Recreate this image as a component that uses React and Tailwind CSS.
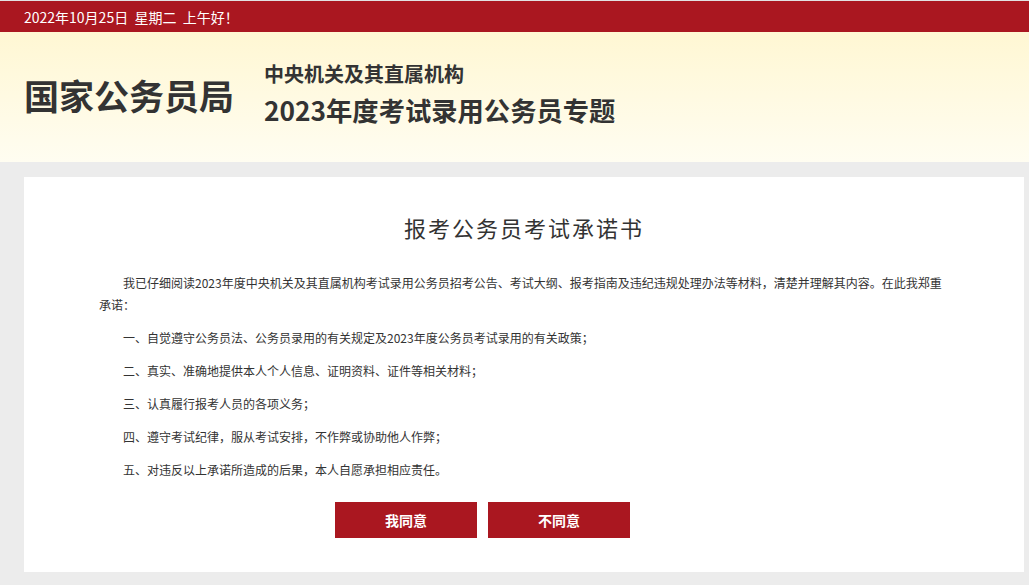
export default function App() {
  const items = [
    "一、自觉遵守公务员法、公务员录用的有关规定及2023年度公务员考试录用的有关政策；",
    "二、真实、准确地提供本人个人信息、证明资料、证件等相关材料；",
    "三、认真履行报考人员的各项义务；",
    "四、遵守考试纪律，服从考试安排，不作弊或协助他人作弊；",
    "五、对违反以上承诺所造成的后果，本人自愿承担相应责任。",
  ];
  const sans = { fontFamily: '"Noto Sans CJK SC", "Noto Sans", sans-serif' };
  return (
    <div className="min-h-[585px] bg-[#ececec] pb-[13px]" style={sans}>
      <div className="h-[1px] bg-[#e2e2e2]" />
      <div className="h-[31px] bg-[#aa1720] flex items-center pl-[24px] text-white text-[14px] leading-none">
        2022年10月25日&nbsp;&nbsp;星期二&nbsp;&nbsp;上午好！
      </div>
      <div className="h-[130px] bg-gradient-to-b from-[#fff7d3] to-[#fffdf1] flex items-center pl-[24px] pb-[4px]">
        <div className="w-[240px] text-[35px] leading-[40px] font-bold text-[#333]">国家公务员局</div>
        <div className="flex flex-col text-[#333] font-bold">
          <div className="text-[20px] leading-[24px]">中央机关及其直属机构</div>
          <div className="text-[26.3px] leading-[36px] mt-[6px]">2023年度考试录用公务员专题</div>
        </div>
      </div>
      <div className="ml-[24px] mt-[15px] w-[1000px] bg-white px-[75px] pt-[38px] pb-[34px] text-[#333]">
        <h1
          className="text-center text-[22px] leading-[30px] tracking-[2px] font-normal text-[#333]"
          style={{ fontFamily: '"Liberation Serif", "Noto Sans CJK SC", serif' }}
        >
          报考公务员考试承诺书
        </h1>
        <div className="mt-[27px] text-[12px] leading-[22px] text-[#333]">
          <p className="indent-[24px]">
            我已仔细阅读2023年度中央机关及其直属机构考试录用公务员招考公告、考试大纲、报考指南及违纪违规处理办法等材料，清楚并理解其内容。在此我郑重承诺：
          </p>
          {items.map((t) => (
            <p key={t} className="indent-[24px] mt-[11px]">
              {t}
            </p>
          ))}
        </div>
        <div className="flex gap-[11px] mt-[21px] ml-[236px]">
          <button className="w-[142px] h-[36px] bg-[#aa1720] text-white text-[14px] font-bold">我同意</button>
          <button className="w-[142px] h-[36px] bg-[#aa1720] text-white text-[14px] font-bold">不同意</button>
        </div>
      </div>
    </div>
  );
}
